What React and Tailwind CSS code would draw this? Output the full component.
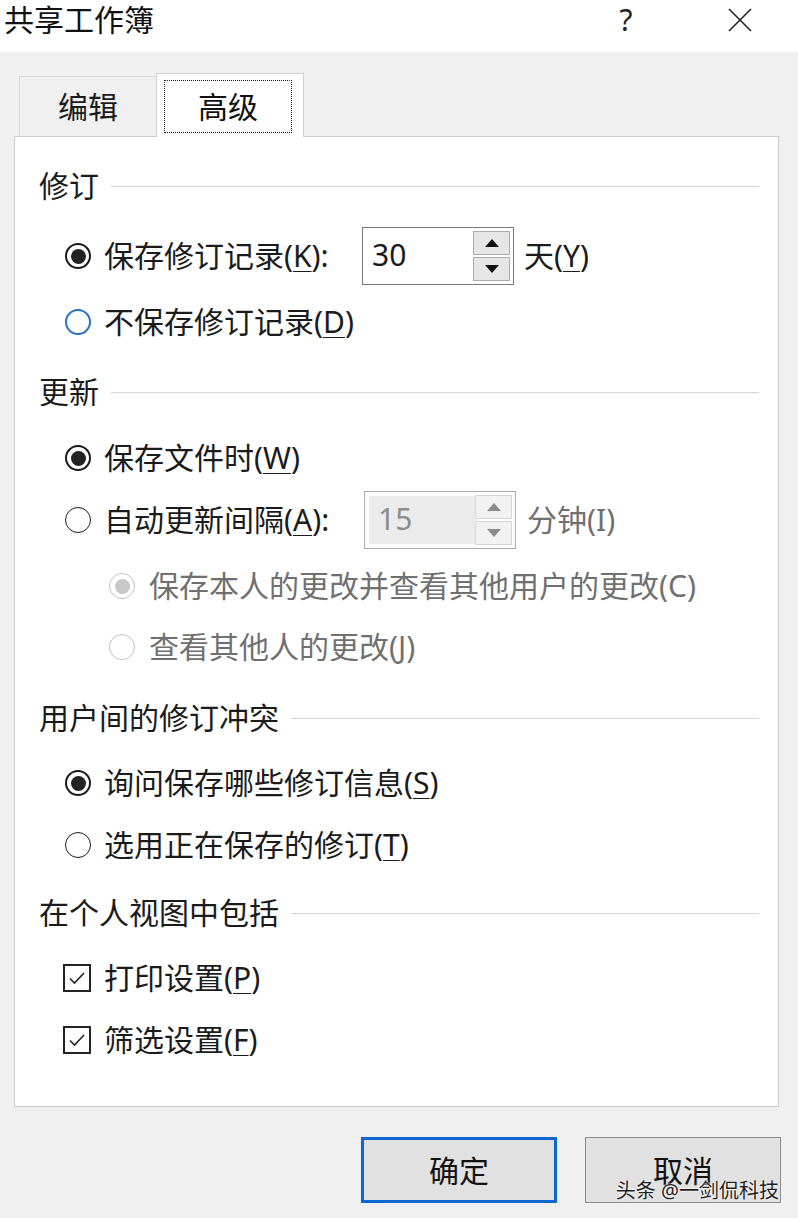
import React from "react";

const font = "font-['Noto_Sans','Noto_Sans_CJK_SC',sans-serif]";

// Section title with the thin rule running to the right edge
const Heading = ({ children, mt }) => (
  <div className={`flex items-center h-10 ${mt}`}>
    <span className="text-[30px] leading-[40px] text-[#1b1b1b]">{children}</span>
    <div className="flex-1 h-px bg-[#d4d4d4] ml-[12px]" />
  </div>
);

const Radio = ({ checked, disabled, focus }) => {
  let ring = "border-[1.5px] border-[#1b1b1b]";
  if (checked) ring = "border-2 border-[#1b1b1b]";
  if (focus) ring = "border-2 border-[#2a72c4]";
  if (disabled) ring = "border-[1.5px] border-[#c2c2c2]";
  return (
    <span
      className={`flex-none w-[26px] h-[26px] rounded-full bg-white flex items-center justify-center ${ring}`}
    >
      {checked && (
        <span
          className={`w-[15px] h-[15px] rounded-full ${
            disabled ? "bg-[#c8c8c8]" : "bg-[#222222]"
          }`}
        />
      )}
    </span>
  );
};

const Checkbox = () => (
  <span className="flex-none w-[28px] h-[28px] border-2 border-[#222222] bg-white flex items-center justify-center">
    <svg width="18" height="14" viewBox="0 0 18 14" fill="none">
      <path d="M2 7.5 L6.5 12 L16 2" stroke="#222222" strokeWidth="1.6" />
    </svg>
  </span>
);

const Arrow = ({ up, color }) => (
  <svg width="14" height="8" viewBox="0 0 14 8">
    <path d={up ? "M7 0 L14 8 L0 8 Z" : "M0 0 L14 0 L7 8 Z"} fill={color} />
  </svg>
);

const Spinner = ({ value, disabled }) => (
  <div
    className={`flex-none w-[152px] h-[58px] border flex ${
      disabled ? "border-[#adadad] bg-white" : "border-[#7a7a7a] bg-white"
    }`}
  >
    <div
      className={`flex-1 flex items-center pl-[9px] pb-[4px] text-[30px] ${
        disabled
          ? "bg-[#ebebeb] text-[#8c8c8c] my-[4px] ml-[4px]"
          : "text-[#1b1b1b]"
      }`}
    >
      {value}
    </div>
    <div className="w-[37px] my-[3px] mr-[3px] flex flex-col gap-[2px]">
      <div
        className={`flex-1 border flex items-center justify-center ${
          disabled ? "border-[#d6d6d6] bg-[#f2f2f2]" : "border-[#acacac] bg-[#e6e6e6]"
        }`}
      >
        <Arrow up color={disabled ? "#8a8a8a" : "#111111"} />
      </div>
      <div
        className={`flex-1 border flex items-center justify-center ${
          disabled ? "border-[#d6d6d6] bg-[#f2f2f2]" : "border-[#acacac] bg-[#e6e6e6]"
        }`}
      >
        <Arrow color={disabled ? "#8a8a8a" : "#111111"} />
      </div>
    </div>
  </div>
);

const U = ({ children }) => (
  <span className="underline decoration-1 underline-offset-[4px]">{children}</span>
);

const RadioRow = ({ mt, checked, focus, children }) => (
  <div className={`flex items-center h-10 ml-[26px] ${mt}`}>
    <Radio checked={checked} focus={focus} />
    <span className="ml-[13px] text-[30px] leading-[40px] text-[#1b1b1b] whitespace-nowrap">
      {children}
    </span>
  </div>
);

const SubRow = ({ mt, checked, children }) => (
  <div className={`flex items-center h-10 ml-[70px] ${mt}`}>
    <Radio checked={checked} disabled />
    <span className="ml-[14px] text-[30px] leading-[40px] text-[#707070] whitespace-nowrap">
      {children}
    </span>
  </div>
);

const CheckRow = ({ mt, children }) => (
  <div className={`flex items-center h-10 ml-[24px] ${mt}`}>
    <Checkbox />
    <span className="ml-[13px] text-[30px] leading-[40px] text-[#1b1b1b] whitespace-nowrap">
      {children}
    </span>
  </div>
);

export default function App() {
  return (
    <div className={`w-[798px] h-[1218px] bg-[#f0f0f0] flex flex-col overflow-hidden ${font}`}>
      {/* Title bar */}
      <div className="h-[52px] bg-white flex items-start flex-none">
        <span className="ml-[4px] text-[30px] leading-[40px] text-[#111111]">共享工作簿</span>
        <div className="flex-1" />
        <span className="w-[24px] text-center text-[30px] leading-[40px] text-[#222222]">?</span>
        <svg className="ml-[90px] mr-[46px] mt-[8px]" width="24" height="24" viewBox="0 0 24 24">
          <path d="M1 1 L23 23 M23 1 L1 23" stroke="#222222" strokeWidth="1.6" />
        </svg>
      </div>

      {/* Tabs */}
      <div className="h-[84px] flex items-end pl-[19px] flex-none">
        <div className="w-[137px] h-[60px] border-t border-l border-[#d8d8d8] flex items-center justify-center text-[30px] text-[#1b1b1b]">
          编辑
        </div>
        <div className="relative z-10 -mb-px w-[148px] h-[64px] bg-white border border-b-0 border-[#cfcfcf] flex pt-[6px] pl-[7px] pr-[11px] pb-[4px]">
          <div className="flex-1 border border-dotted border-[#222222] flex items-center justify-center text-[30px] text-[#111111]">
            高级
          </div>
        </div>
      </div>

      {/* Panel */}
      <div className="ml-[14px] w-[765px] h-[971px] flex-none bg-white border border-[#cccccc] pl-[24px] pr-[19px] flex flex-col">
        <Heading mt="mt-[29px]">修订</Heading>

        <div className="flex items-center h-10 ml-[26px] mt-[30px]">
          <Radio checked />
          <span className="ml-[13px] w-[258px] text-[30px] leading-[40px] text-[#1b1b1b] whitespace-nowrap">
            保存修订记录(<U>K</U>):
          </span>
          <Spinner value="30" />
          <span className="ml-[10px] text-[30px] leading-[40px] text-[#1b1b1b]">
            天(<U>Y</U>)
          </span>
        </div>

        <RadioRow mt="mt-[26px]" focus>
          不保存修订记录(<U>D</U>)
        </RadioRow>

        <Heading mt="mt-[30px]">更新</Heading>

        <RadioRow mt="mt-[26px]" checked>
          保存文件时(<U>W</U>)
        </RadioRow>

        <div className="flex items-center h-10 ml-[26px] mt-[22px]">
          <Radio />
          <span className="ml-[13px] w-[260px] text-[30px] leading-[40px] text-[#1b1b1b] whitespace-nowrap">
            自动更新间隔(<U>A</U>):
          </span>
          <Spinner value="15" disabled />
          <span className="ml-[11px] text-[30px] leading-[40px] text-[#707070]">分钟(I)</span>
        </div>

        <SubRow mt="mt-[26px]" checked>
          保存本人的更改并查看其他用户的更改(C)
        </SubRow>
        <SubRow mt="mt-[21px]">查看其他人的更改(J)</SubRow>

        <Heading mt="mt-[31px]">用户间的修订冲突</Heading>

        <RadioRow mt="mt-[25px]" checked>
          询问保存哪些修订信息(<U>S</U>)
        </RadioRow>
        <RadioRow mt="mt-[22px]">
          选用正在保存的修订(<U>T</U>)
        </RadioRow>

        <Heading mt="mt-[28px]">在个人视图中包括</Heading>

        <CheckRow mt="mt-[25px]">
          打印设置(<U>P</U>)
        </CheckRow>
        <CheckRow mt="mt-[22px]">
          筛选设置(<U>F</U>)
        </CheckRow>
      </div>

      {/* Buttons */}
      <div className="flex justify-end gap-[28px] pr-[17px] mt-[30px] flex-none">
        <button className="w-[196px] h-[66px] bg-[#e1e1e1] border-[3px] border-[#0b66d0] text-[30px] text-[#111111] flex items-center justify-center">
          确定
        </button>
        <button className="relative w-[196px] h-[66px] bg-[#e1e1e1] border border-[#8c8c8c] text-[30px] text-[#111111] flex items-center justify-center">
          取消
          <span className="absolute right-[1px] top-[41px] text-[20px] leading-[24px] text-[#1e1e1e] whitespace-nowrap [text-shadow:0_0_2px_#ffffff,0_0_2px_#ffffff]">
            头条 @一剑侃科技
          </span>
        </button>
      </div>
    </div>
  );
}
